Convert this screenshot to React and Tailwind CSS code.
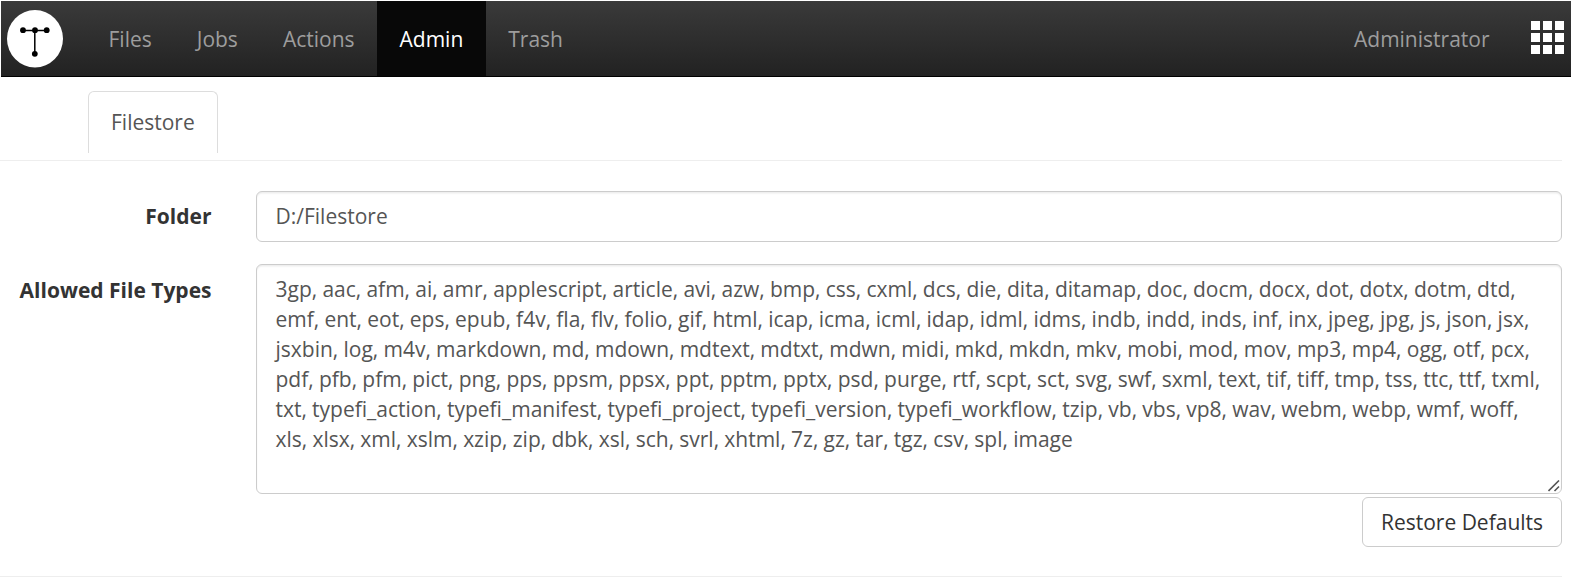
import React, { useState } from "react";

const navItems = ["Files", "Jobs", "Actions", "Admin", "Trash"];

const defaultFileTypes =
  "3gp, aac, afm, ai, amr, applescript, article, avi, azw, bmp, css, cxml, dcs, die, dita, ditamap, doc, docm, docx, dot, dotx, dotm, dtd, emf, ent, eot, eps, epub, f4v, fla, flv, folio, gif, html, icap, icma, icml, idap, idml, idms, indb, indd, inds, inf, inx, jpeg, jpg, js, json, jsx, jsxbin, log, m4v, markdown, md, mdown, mdtext, mdtxt, mdwn, midi, mkd, mkdn, mkv, mobi, mod, mov, mp3, mp4, ogg, otf, pcx, pdf, pfb, pfm, pict, png, pps, ppsm, ppsx, ppt, pptm, pptx, psd, purge, rtf, scpt, sct, svg, swf, sxml, text, tif, tiff, tmp, tss, ttc, ttf, txml, txt, typefi_action, typefi_manifest, typefi_project, typefi_version, typefi_workflow, tzip, vb, vbs, vp8, wav, webm, webp, wmf, woff, xls, xlsx, xml, xslm, xzip, zip, dbk, xsl, sch, svrl, xhtml, 7z, gz, tar, tgz, csv, spl, image";

const Logo = () => (
  <svg className="w-[57px] h-[58px] ml-1.5 mt-[9px] shrink-0" viewBox="0 0 57 58">
    <ellipse cx="28" cy="28.7" rx="28" ry="28.7" fill="#fff" />
    <path d="M16 20.5h24M27.8 20v24" stroke="#000" strokeWidth="1.5" fill="none" />
    <circle cx="16" cy="20.2" r="2.9" />
    <circle cx="28" cy="20.2" r="2.9" />
    <circle cx="39.7" cy="20.2" r="2.9" />
    <circle cx="27.8" cy="43.8" r="2.9" />
  </svg>
);

const AppsIcon = () => (
  <div className="grid grid-cols-3 gap-[3px] mt-5 mr-[7px] ml-[19px]">
    {[...Array(9)].map((_, i) => (
      <span key={i} className="size-[9px] bg-white" />
    ))}
  </div>
);

// Resize grip in the corner of the textarea
const ResizeGrip = () => (
  <svg
    className="pointer-events-none absolute right-[2px] bottom-[2px] size-3"
    viewBox="0 0 12 12"
    stroke="#555"
    strokeWidth="1.6"
  >
    <path d="M0.5 11L11 0.5M6.5 11L11 6.5" fill="none" />
  </svg>
);

const App = () => {
  const [active, setActive] = useState("Admin");
  const [folder, setFolder] = useState("D:/Filestore");
  const [fileTypes, setFileTypes] = useState(defaultFileTypes);

  return (
    <div className="h-[579px] overflow-hidden bg-white pt-px font-['Open_Sans',sans-serif] text-[21px] leading-[30px] text-[#333]">
      {/* Top navigation */}
      <nav className="ml-px flex h-[76px] items-start border-b border-black bg-linear-to-b/srgb from-[#3a3a3a] to-[#222]">
        <Logo />
        <div className="ml-[22px] flex h-full">
          {navItems.map((item) => (
            <button
              key={item}
              onClick={() => setActive(item)}
              className={
                active === item
                  ? "h-full bg-[#080808] px-[22.5px] text-white"
                  : "h-full px-[22.5px] text-[#9d9d9d]"
              }
            >
              {item}
            </button>
          ))}
        </div>
        <button className="ml-auto h-full px-[22.5px] text-[#9d9d9d]">Administrator</button>
        <AppsIcon />
      </nav>

      <div className="mr-[9px]">
        {/* Tabs */}
        <div className="flex h-[84px] border-b border-[#eee] pt-3.5 pl-[88px]">
          <div className="h-[61.5px] rounded-t-md border border-b-0 border-[#ddd] px-[22px] pt-[15px] text-[#555]">
            Filestore
          </div>
        </div>

        {/* Settings form */}
        <form onSubmit={(e) => e.preventDefault()} className="border-b border-[#eee] pt-[30px] pb-[29px]">
          <div className="flex">
            <label htmlFor="folder" className="w-[211.5px] pt-[10px] text-right font-bold">
              Folder
            </label>
            <input
              id="folder"
              value={folder}
              onChange={(e) => setFolder(e.target.value)}
              className="ml-[44.5px] h-[51px] flex-1 rounded-md border border-[#ccc] px-[18.5px] pb-0.5 text-[#555] shadow-[inset_0_1.5px_1.5px_rgba(0,0,0,0.075)] outline-none"
            />
          </div>
          <div className="mt-[22px] flex">
            <label htmlFor="fileTypes" className="w-[211.5px] pt-[11px] text-right font-bold">
              Allowed File Types
            </label>
            <div className="relative ml-[44.5px] flex-1">
              <textarea
                id="fileTypes"
                value={fileTypes}
                spellCheck={false}
                onChange={(e) => setFileTypes(e.target.value)}
                className="block h-[230px] w-full resize-none rounded-md border border-[#ccc] px-[18.5px] py-[9px] [word-spacing:-0.25px] text-[#555] shadow-[inset_0_1.5px_1.5px_rgba(0,0,0,0.075)] outline-none"
              />
              <ResizeGrip />
            </div>
          </div>
          <div className="mt-[3px] flex justify-end">
            <button
              onClick={() => setFileTypes(defaultFileTypes)}
              className="h-[50px] w-[200px] rounded-md border border-[#ccc] bg-white text-[#333]"
            >
              Restore Defaults
            </button>
          </div>
        </form>
      </div>
    </div>
  );
};

export default App;
